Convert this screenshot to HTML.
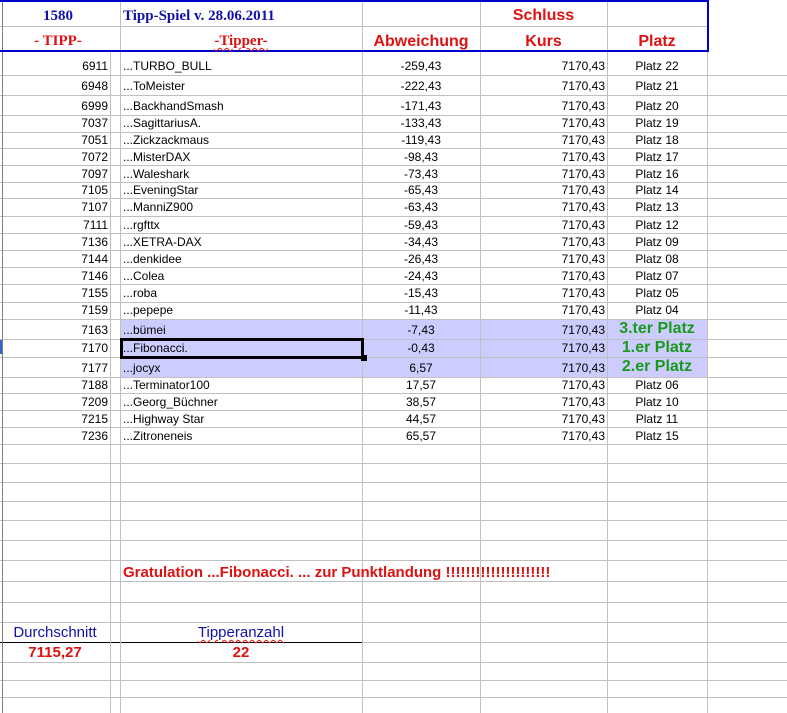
<!DOCTYPE html>
<html><head><meta charset="utf-8"><style>
*{margin:0;padding:0;box-sizing:border-box}
body{width:787px;height:713px;overflow:hidden;background:#fff;position:relative;font-family:"Liberation Sans",Arial,sans-serif;font-size:12px;color:#000}
.h{position:absolute;left:0;width:787px;height:1px;background:#c0c0c0}
.v{position:absolute;width:1px;background:#c0c0c0}
.t{position:absolute;white-space:nowrap;line-height:14px}
.r{text-align:right}.c{text-align:center}
.hl{position:absolute;left:121px;width:586px;background:#ccccff}
.g{color:#1a9a1a;font-weight:bold;font-size:16px}
.serif{font-family:"Liberation Serif",serif;font-weight:bold;font-size:15px}
.red{color:#dd1111}.blue{color:#1111aa}
.bh{font-weight:bold;font-size:16px;color:#dd1111}
.wv{text-decoration:underline wavy #dd1111;text-decoration-thickness:1px;text-underline-offset:2px}
</style></head><body>
<div class="hl" style="top:319px;height:58px"></div>
<div class="h" style="top:26px;width:707px"></div>
<div class="h" style="top:75px"></div><div class="h" style="top:95px"></div><div class="h" style="top:115px"></div>
<div class="h" style="top:132px"></div><div class="h" style="top:148px"></div><div class="h" style="top:165px"></div>
<div class="h" style="top:182px"></div><div class="h" style="top:198px"></div><div class="h" style="top:216px"></div>
<div class="h" style="top:233px"></div><div class="h" style="top:250px"></div><div class="h" style="top:267px"></div>
<div class="h" style="top:284px"></div><div class="h" style="top:302px"></div><div class="h" style="top:319px"></div>
<div class="h" style="top:339px"></div><div class="h" style="top:357px"></div><div class="h" style="top:377px"></div>
<div class="h" style="top:393px"></div><div class="h" style="top:410px"></div><div class="h" style="top:427px"></div>
<div class="h" style="top:444px"></div><div class="h" style="top:463px"></div><div class="h" style="top:482px"></div>
<div class="h" style="top:501px"></div><div class="h" style="top:520px"></div><div class="h" style="top:540px"></div>
<div class="h" style="top:560px"></div><div class="h" style="top:581px"></div><div class="h" style="top:602px"></div>
<div class="h" style="top:622px"></div><div class="h" style="top:662px"></div>
<div class="h" style="top:680px"></div><div class="h" style="top:697px"></div>
<div class="h" style="top:642px"></div>
<div style="position:absolute;left:0;top:642px;width:362px;height:1px;background:#000"></div>
<div class="v" style="left:2px;top:0;height:713px;background:#808080"></div>
<div class="v" style="left:110px;top:51px;height:662px"></div>
<div class="v" style="left:120px;top:0;height:713px"></div>
<div class="v" style="left:362px;top:0;height:713px"></div>
<div class="v" style="left:480px;top:0;height:713px"></div>
<div class="v" style="left:607px;top:0;height:713px"></div>
<div class="v" style="left:707px;top:0;height:713px"></div>
<div style="position:absolute;left:0;top:340px;width:2px;height:14px;background:#3366cc"></div>
<div style="position:absolute;left:0;top:0;width:709px;height:52px;border:2px solid #0000cc;border-left:none"></div>
<div class="t serif blue c" style="left:3px;width:110px;top:8px;line-height:17px">1580</div>
<div class="t serif blue" style="left:123px;top:8px;line-height:17px">Tipp-Spiel v. 28.06.2011</div>
<div class="t bh c" style="left:480px;width:127px;top:7px;line-height:18px">Schluss</div>
<div class="t serif red c" style="left:3px;width:110px;top:33px;line-height:17px">- TIPP-</div>
<div class="t serif red c wv" style="left:120px;width:242px;top:33px;line-height:17px">-Tipper-</div>
<div class="t bh c" style="left:362px;width:118px;top:33px;line-height:18px">Abweichung</div>
<div class="t bh c" style="left:480px;width:127px;top:33px;line-height:18px">Kurs</div>
<div class="t bh c" style="left:607px;width:100px;top:33px;line-height:18px">Platz</div>
<div class="t r" style="left:0;width:108px;top:59px">6911</div><div class="t" style="left:123px;top:59px">...TURBO_BULL</div><div class="t c" style="left:362px;width:118px;top:59px">-259,43</div><div class="t r" style="left:480px;width:125px;top:59px">7170,43</div><div class="t c" style="left:607px;width:100px;top:59px">Platz 22</div>
<div class="t r" style="left:0;width:108px;top:79px">6948</div><div class="t" style="left:123px;top:79px">...ToMeister</div><div class="t c" style="left:362px;width:118px;top:79px">-222,43</div><div class="t r" style="left:480px;width:125px;top:79px">7170,43</div><div class="t c" style="left:607px;width:100px;top:79px">Platz 21</div>
<div class="t r" style="left:0;width:108px;top:99px">6999</div><div class="t" style="left:123px;top:99px">...BackhandSmash</div><div class="t c" style="left:362px;width:118px;top:99px">-171,43</div><div class="t r" style="left:480px;width:125px;top:99px">7170,43</div><div class="t c" style="left:607px;width:100px;top:99px">Platz 20</div>
<div class="t r" style="left:0;width:108px;top:116px">7037</div><div class="t" style="left:123px;top:116px">...SagittariusA.</div><div class="t c" style="left:362px;width:118px;top:116px">-133,43</div><div class="t r" style="left:480px;width:125px;top:116px">7170,43</div><div class="t c" style="left:607px;width:100px;top:116px">Platz 19</div>
<div class="t r" style="left:0;width:108px;top:133px">7051</div><div class="t" style="left:123px;top:133px">...Zickzackmaus</div><div class="t c" style="left:362px;width:118px;top:133px">-119,43</div><div class="t r" style="left:480px;width:125px;top:133px">7170,43</div><div class="t c" style="left:607px;width:100px;top:133px">Platz 18</div>
<div class="t r" style="left:0;width:108px;top:150px">7072</div><div class="t" style="left:123px;top:150px">...MisterDAX</div><div class="t c" style="left:362px;width:118px;top:150px">-98,43</div><div class="t r" style="left:480px;width:125px;top:150px">7170,43</div><div class="t c" style="left:607px;width:100px;top:150px">Platz 17</div>
<div class="t r" style="left:0;width:108px;top:167px">7097</div><div class="t" style="left:123px;top:167px">...Waleshark</div><div class="t c" style="left:362px;width:118px;top:167px">-73,43</div><div class="t r" style="left:480px;width:125px;top:167px">7170,43</div><div class="t c" style="left:607px;width:100px;top:167px">Platz 16</div>
<div class="t r" style="left:0;width:108px;top:183px">7105</div><div class="t" style="left:123px;top:183px">...EveningStar</div><div class="t c" style="left:362px;width:118px;top:183px">-65,43</div><div class="t r" style="left:480px;width:125px;top:183px">7170,43</div><div class="t c" style="left:607px;width:100px;top:183px">Platz 14</div>
<div class="t r" style="left:0;width:108px;top:200px">7107</div><div class="t" style="left:123px;top:200px">...ManniZ900</div><div class="t c" style="left:362px;width:118px;top:200px">-63,43</div><div class="t r" style="left:480px;width:125px;top:200px">7170,43</div><div class="t c" style="left:607px;width:100px;top:200px">Platz 13</div>
<div class="t r" style="left:0;width:108px;top:218px">7111</div><div class="t" style="left:123px;top:218px">...rgfttx</div><div class="t c" style="left:362px;width:118px;top:218px">-59,43</div><div class="t r" style="left:480px;width:125px;top:218px">7170,43</div><div class="t c" style="left:607px;width:100px;top:218px">Platz 12</div>
<div class="t r" style="left:0;width:108px;top:235px">7136</div><div class="t" style="left:123px;top:235px">...XETRA-DAX</div><div class="t c" style="left:362px;width:118px;top:235px">-34,43</div><div class="t r" style="left:480px;width:125px;top:235px">7170,43</div><div class="t c" style="left:607px;width:100px;top:235px">Platz 09</div>
<div class="t r" style="left:0;width:108px;top:252px">7144</div><div class="t" style="left:123px;top:252px">...denkidee</div><div class="t c" style="left:362px;width:118px;top:252px">-26,43</div><div class="t r" style="left:480px;width:125px;top:252px">7170,43</div><div class="t c" style="left:607px;width:100px;top:252px">Platz 08</div>
<div class="t r" style="left:0;width:108px;top:269px">7146</div><div class="t" style="left:123px;top:269px">...Colea</div><div class="t c" style="left:362px;width:118px;top:269px">-24,43</div><div class="t r" style="left:480px;width:125px;top:269px">7170,43</div><div class="t c" style="left:607px;width:100px;top:269px">Platz 07</div>
<div class="t r" style="left:0;width:108px;top:286px">7155</div><div class="t" style="left:123px;top:286px">...roba</div><div class="t c" style="left:362px;width:118px;top:286px">-15,43</div><div class="t r" style="left:480px;width:125px;top:286px">7170,43</div><div class="t c" style="left:607px;width:100px;top:286px">Platz 05</div>
<div class="t r" style="left:0;width:108px;top:303px">7159</div><div class="t" style="left:123px;top:303px">...pepepe</div><div class="t c" style="left:362px;width:118px;top:303px">-11,43</div><div class="t r" style="left:480px;width:125px;top:303px">7170,43</div><div class="t c" style="left:607px;width:100px;top:303px">Platz 04</div>
<div class="t r" style="left:0;width:108px;top:323px">7163</div><div class="t" style="left:123px;top:323px">...bümei</div><div class="t c" style="left:362px;width:118px;top:323px">-7,43</div><div class="t r" style="left:480px;width:125px;top:323px">7170,43</div><div class="t c g" style="left:607px;width:100px;top:320px;line-height:17px">3.ter Platz</div>
<div class="t r" style="left:0;width:108px;top:341px">7170</div><div class="t" style="left:123px;top:341px">...Fibonacci.</div><div class="t c" style="left:362px;width:118px;top:341px">-0,43</div><div class="t r" style="left:480px;width:125px;top:341px">7170,43</div><div class="t c g" style="left:607px;width:100px;top:339px;line-height:17px">1.er Platz</div>
<div class="t r" style="left:0;width:108px;top:361px">7177</div><div class="t" style="left:123px;top:361px">...jocyx</div><div class="t c" style="left:362px;width:118px;top:361px">6,57</div><div class="t r" style="left:480px;width:125px;top:361px">7170,43</div><div class="t c g" style="left:607px;width:100px;top:358px;line-height:17px">2.er Platz</div>
<div class="t r" style="left:0;width:108px;top:378px">7188</div><div class="t" style="left:123px;top:378px">...Terminator100</div><div class="t c" style="left:362px;width:118px;top:378px">17,57</div><div class="t r" style="left:480px;width:125px;top:378px">7170,43</div><div class="t c" style="left:607px;width:100px;top:378px">Platz 06</div>
<div class="t r" style="left:0;width:108px;top:395px">7209</div><div class="t" style="left:123px;top:395px">...Georg_Büchner</div><div class="t c" style="left:362px;width:118px;top:395px">38,57</div><div class="t r" style="left:480px;width:125px;top:395px">7170,43</div><div class="t c" style="left:607px;width:100px;top:395px">Platz 10</div>
<div class="t r" style="left:0;width:108px;top:412px">7215</div><div class="t" style="left:123px;top:412px">...Highway Star</div><div class="t c" style="left:362px;width:118px;top:412px">44,57</div><div class="t r" style="left:480px;width:125px;top:412px">7170,43</div><div class="t c" style="left:607px;width:100px;top:412px">Platz 11</div>
<div class="t r" style="left:0;width:108px;top:429px">7236</div><div class="t" style="left:123px;top:429px">...Zitroneneis</div><div class="t c" style="left:362px;width:118px;top:429px">65,57</div><div class="t r" style="left:480px;width:125px;top:429px">7170,43</div><div class="t c" style="left:607px;width:100px;top:429px">Platz 15</div>
<div style="position:absolute;left:120px;top:338px;width:244px;height:21px;border:3px solid #000"></div>
<div style="position:absolute;left:361px;top:355px;width:6px;height:6px;background:#000"></div>
<div class="t bh" style="left:123px;top:564px;font-size:15px;line-height:17px">Gratulation ...Fibonacci. ...  zur Punktlandung !!!!!!!!!!!!!!!!!!!!!</div>
<div class="t blue c" style="left:0;width:110px;top:624px;font-size:15px;line-height:17px">Durchschnitt</div>
<div class="t blue c wv" style="left:120px;width:242px;top:624px;font-size:15px;line-height:17px">Tipperanzahl</div>
<div class="t bh c" style="left:0;width:110px;top:644px;font-size:15px;line-height:17px">7115,27</div>
<div class="t bh c" style="left:120px;width:242px;top:644px;font-size:15px;line-height:17px">22</div>
</body></html>
